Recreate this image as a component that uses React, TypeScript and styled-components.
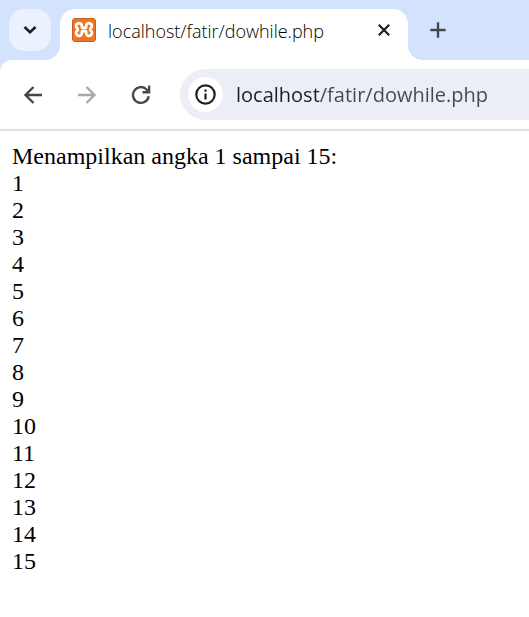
import React from "react";
import styled, { createGlobalStyle } from "styled-components";

const GlobalStyle = createGlobalStyle`
  * { box-sizing: border-box; }
  body { margin: 0; background: #ffffff; }
`;

const uiFont = `"Open Sans", "Noto Sans", sans-serif`;

const TabStrip = styled.header`
  display: flex;
  align-items: flex-end;
  height: 60px;
  background: #d3e3fd;
`;

const IconButton = styled.button<{ $size: number }>`
  display: flex;
  align-items: center;
  justify-content: center;
  flex: none;
  width: ${(p) => p.$size}px;
  height: ${(p) => p.$size}px;
  padding: 0;
  border: 0;
  border-radius: 50%;
  background: transparent;
`;

const TabSearch = styled(IconButton)`
  align-self: center;
  margin-left: 9px;
  border-radius: 15px;
  background: #ebf1fe;
`;

const Tab = styled.div`
  position: relative;
  display: flex;
  align-items: center;
  flex: 0 1 348px;
  min-width: 0;
  height: 51px;
  margin-left: 9px;
  padding: 0 12px 9px;
  border-radius: 15px 15px 0 0;
  background: #ffffff;

  &::before,
  &::after {
    content: "";
    position: absolute;
    bottom: 0;
    width: 15px;
    height: 15px;
  }
  &::before {
    right: 100%;
    background: radial-gradient(circle at 0 0, transparent 15px, #ffffff 15px);
  }
  &::after {
    left: 100%;
    background: radial-gradient(circle at 100% 0, transparent 15px, #ffffff 15px);
  }
`;

const TabTitle = styled.span`
  flex: 1;
  min-width: 0;
  margin-left: 12px;
  padding-top: 2px;
  overflow: hidden;
  white-space: nowrap;
  font: 300 18px/24px ${uiFont};
  color: #000000;
`;

const NewTab = styled(IconButton)`
  align-self: center;
  margin-left: 9px;
`;

const ToolbarBack = styled.div`
  background: #d3e3fd;
`;

const Toolbar = styled.nav`
  display: flex;
  align-items: center;
  height: 71px;
  padding-left: 9px;
  border-bottom: 2px solid #e0e0e0;
  border-radius: 12px 0 0 0;
  background: #ffffff;
`;

const NavGroup = styled.div`
  display: flex;
  gap: 6px;
`;

const AddressBar = styled.div`
  display: flex;
  align-items: center;
  flex: 1;
  min-width: 0;
  height: 51px;
  margin-left: 15px;
  padding-left: 8px;
  border-radius: 26px 0 0 26px;
  background: #ebeef7;
`;

const SiteInfo = styled(IconButton)`
  background: #ffffff;
`;

const Url = styled.input`
  flex: 1;
  min-width: 0;
  height: 32px;
  margin-left: 13px;
  padding: 0;
  border: 0;
  outline: 0;
  font: 400 20px/32px ${uiFont};
  color: transparent;
  background: linear-gradient(to right, #1f1f1f 83px, #474747 83px);
  background-clip: text;
  -webkit-background-clip: text;
`;

const Page = styled.main`
  padding: 12px;
  font: 24px/27px "Liberation Serif", "Times New Roman", serif;
  color: #000000;
`;

const Line = styled.div``;

const Favicon = () => (
  <svg width="24" height="24" viewBox="0 0 24 24" aria-hidden="true">
    <rect x="0.5" y="0.5" width="23" height="23" rx="2.5" fill="#ee7623" stroke="#c4601f" />
    <path
      d="M10.500 9.800h3c.8 0 .6-.8.6-1.800a2.900 2.900 0 1 1 4.500 2.400q-.9 1.100 0 2.200a2.900 2.900 0 1 1-4.500 2.400c0-1 .2-1.800-.6-1.800h-3c-.8 0-.6.8-.6 1.800a2.900 2.900 0 1 1-4.500-2.400q.9-1.100 0-2.200A2.900 2.900 0 1 1 9.900 8c0 1-.2 1.800.6 1.800z"
      fill="none"
      stroke="#ffffff"
      strokeWidth="2.800"
      strokeLinejoin="round"
    />
  </svg>
);

const url = "localhost/fatir/dowhile.php";
const numbers = Array.from({ length: 15 }, (_, i) => i + 1);

export default function App() {
  return (
    <>
      <GlobalStyle />
      <TabStrip>
        <TabSearch $size={42} aria-label="Search tabs">
          <svg width="14" height="10" viewBox="0 0 14 10" fill="none" stroke="#1f1f1f" strokeWidth="2.6">
            <path d="M1.500 2 7 7.300 12.500 2" />
          </svg>
        </TabSearch>
        <Tab>
          <Favicon />
          <TabTitle>{url}</TabTitle>
          <IconButton $size={24} aria-label="Close tab">
            <svg width="12" height="12" viewBox="0 0 12 12" fill="none" stroke="#1f1f1f" strokeWidth="2.200">
              <path d="M.8.8 11.200 11.200M11.200.8.8 11.200" />
            </svg>
          </IconButton>
        </Tab>
        <NewTab $size={42} aria-label="New tab">
          <svg width="16" height="16" viewBox="0 0 16 16" fill="none" stroke="#474747" strokeWidth="2.400">
            <path d="M8 .3v15.400M.3 8h15.400" />
          </svg>
        </NewTab>
      </TabStrip>
      <ToolbarBack>
        <Toolbar>
          <NavGroup>
            <IconButton $size={48} aria-label="Back">
              <svg width="20" height="20" viewBox="0 0 20 20" fill="none" stroke="#474747" strokeWidth="2.400">
                <path d="M19 10H3M10.500 2 2.500 10l8 8" />
              </svg>
            </IconButton>
            <IconButton $size={48} aria-label="Forward" disabled>
              <svg width="20" height="20" viewBox="0 0 20 20" fill="none" stroke="#a9a9a9" strokeWidth="2.400">
                <path d="M1 10h16M9.500 2l8 8-8 8" />
              </svg>
            </IconButton>
            <IconButton $size={48} aria-label="Reload">
              <svg width="20" height="20" viewBox="0 0 20 20" fill="none" stroke="#474747" strokeWidth="2.400">
                <path d="M17.700 11.200A7.900 7.900 0 1 1 15.600 4.500L17.800 6.700" />
                <path d="M19.300.6v7.800h-7.800V6.100h5.500V.6z" fill="#474747" stroke="none" />
              </svg>
            </IconButton>
          </NavGroup>
          <AddressBar>
            <SiteInfo $size={35} aria-label="View site information">
              <svg width="21" height="21" viewBox="0 0 21 21" fill="none" stroke="#1f1f1f" strokeWidth="2.200">
                <circle cx="10.500" cy="10.500" r="9.200" />
                <path d="M10.500 9.500v6M10.500 5.500v2.200" />
              </svg>
            </SiteInfo>
            <Url aria-label="Address" defaultValue={url} spellCheck={false} />
          </AddressBar>
        </Toolbar>
      </ToolbarBack>
      <Page>
        <Line>Menampilkan angka 1 sampai 15:</Line>
        {numbers.map((n) => (
          <Line key={n}>{n}</Line>
        ))}
      </Page>
    </>
  );
}
